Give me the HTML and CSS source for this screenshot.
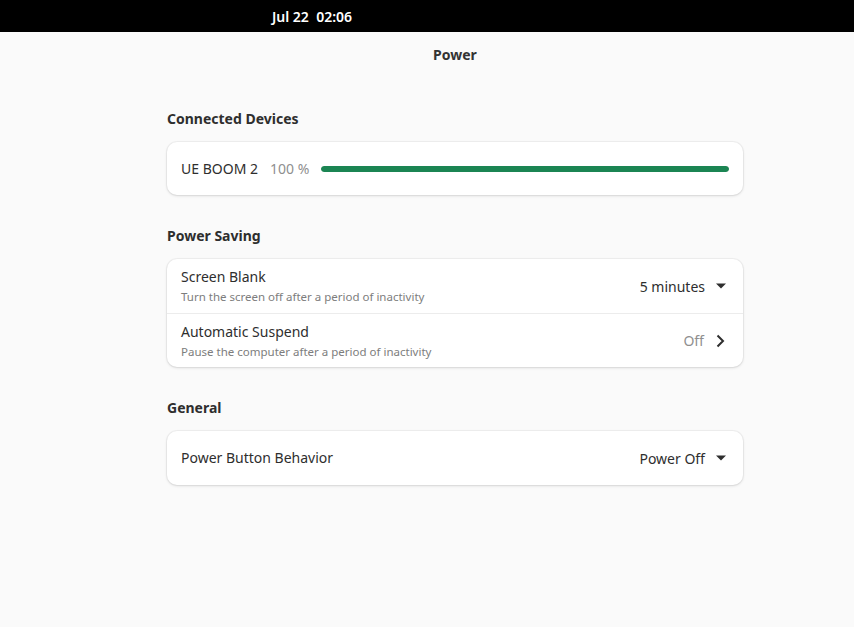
FILE: index.html
```html
<!DOCTYPE html>
<html lang="en">
<head>
    <meta charset="UTF-8">
    <title>Power</title>
    <link rel="stylesheet" href="styles.css">
</head>
<body>
    <!-- Top bar -->
    <div class="topbar">
        <span class="clock">Jul 22&nbsp; 02:06</span>
    </div>

    <div class="window">
        <div class="headerbar">Power</div>

        <div class="content">
            <h3 class="group-title">Connected Devices</h3>
            <div class="card">
                <div class="row device-row">
                    <span class="device-name">UE BOOM 2</span>
                    <span class="device-level">100 %</span>
                    <div class="level-bar"><div class="level-fill" style="width: 100%"></div></div>
                </div>
            </div>

            <h3 class="group-title">Power Saving</h3>
            <div class="card">
                <div class="row">
                    <div class="row-text">
                        <div class="row-title">Screen Blank</div>
                        <div class="row-subtitle">Turn the screen off after a period of inactivity</div>
                    </div>
                    <span class="row-value">5 minutes</span>
                    <svg class="dropdown-icon" width="12" height="8" viewBox="0 0 12 8"><path d="M1 1.5h10L6 6.5z" fill="#2e2e2e"/></svg>
                </div>
                <div class="row">
                    <div class="row-text">
                        <div class="row-title">Automatic Suspend</div>
                        <div class="row-subtitle">Pause the computer after a period of inactivity</div>
                    </div>
                    <span class="row-value dim">Off</span>
                    <svg class="chevron-icon" width="10" height="14" viewBox="0 0 10 14"><path d="M2.5 1.5L8 7l-5.5 5.5" fill="none" stroke="#2e2e2e" stroke-width="2"/></svg>
                </div>
            </div>

            <h3 class="group-title">General</h3>
            <div class="card">
                <div class="row">
                    <div class="row-text">
                        <div class="row-title">Power Button Behavior</div>
                    </div>
                    <span class="row-value">Power Off</span>
                    <svg class="dropdown-icon" width="12" height="8" viewBox="0 0 12 8"><path d="M1 1.5h10L6 6.5z" fill="#2e2e2e"/></svg>
                </div>
            </div>
        </div>
    </div>
</body>
</html>
```

FILE: styles.css
```css
body {
    margin: 0;
    font-family: "Noto Sans", "Open Sans", sans-serif;
    background-color: #fafafa;
    color: #2e2e2e;
    height: 627px;
    overflow: hidden;
}

.topbar {
    height: 32px;
    background-color: #000;
    color: #fff;
    display: flex;
    align-items: center;
    padding-left: 272px;
    font-size: 14px;
    font-weight: 600;
}

.window {
    background-color: #fafafa;
}

.headerbar {
    height: 44px;
    display: flex;
    align-items: center;
    justify-content: center;
    padding-left: 56px;
    font-size: 14px;
    font-weight: 700;
    color: #333;
}

.content {
    width: 576px;
    margin-left: 167px;
    padding-top: 30px;
}

.group-title {
    margin: 0 0 10px;
    font-size: 14px;
    font-weight: 700;
    color: #2e2e2e;
    line-height: 26px;
}

.card {
    background-color: #fff;
    border-radius: 10px;
    box-shadow: 0 0 0 1px rgba(0, 0, 0, 0.04), 0 1px 3px rgba(0, 0, 0, 0.12);
    margin-bottom: 28px;
    overflow: hidden;
}

.row {
    height: 54px;
    display: flex;
    align-items: center;
    padding: 0 14px;
    box-sizing: border-box;
}

.row + .row {
    border-top: 1px solid #ececec;
}

.device-row {
    height: 53px;
}

.device-name {
    font-size: 14px;
}

.device-level {
    font-size: 14px;
    color: #8f8f8f;
    margin-left: 12px;
}

.level-bar {
    flex: 1;
    height: 6px;
    margin-left: 12px;
    border-radius: 3px;
    background-color: #e0e0e0;
    overflow: hidden;
}

.level-fill {
    height: 100%;
    background-color: #1b8553;
    border-radius: 3px;
}

.row-text {
    flex: 1;
}

.row-title {
    font-size: 14px;
    line-height: 20px;
}

.row-subtitle {
    margin-top: 2px;
    font-size: 11.5px;
    color: #7d7d7d;
    line-height: 16px;
}

.row-value {
    font-size: 14px;
    margin-right: 10px;
}

.row-value.dim {
    color: #8f8f8f;
    margin-right: 11px;
}

.dropdown-icon {
    margin-right: 2px;
}

.chevron-icon {
    margin-right: 4px;
}
```
